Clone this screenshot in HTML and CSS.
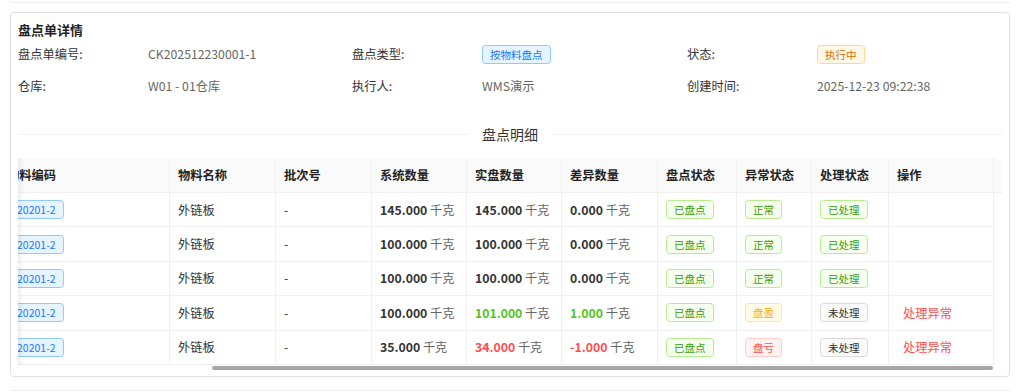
FILE: index.html
```html
<!DOCTYPE html>
<html lang="zh-CN">
<head>
    <meta charset="UTF-8">
    <meta name="viewport" content="width=device-width, initial-scale=1.0">
    <title>盘点单详情</title>
    <link rel="stylesheet" href="styles.css">
</head>
<body>

<div class="page">
    <div class="prev"></div>

    <div class="card">
        <div class="card-title">盘点单详情</div>

        <div class="desc">
            <div class="desc-item"><span class="desc-label">盘点单编号:</span><span class="desc-value">CK202512230001-1</span></div>
            <div class="desc-item"><span class="desc-label">盘点类型:</span><span class="tag tag-blue">按物料盘点</span></div>
            <div class="desc-item"><span class="desc-label">状态:</span><span class="tag tag-orange">执行中</span></div>
            <div class="desc-item"><span class="desc-label">仓库:</span><span class="desc-value">W01 - 01仓库</span></div>
            <div class="desc-item"><span class="desc-label">执行人:</span><span class="desc-value">WMS演示</span></div>
            <div class="desc-item"><span class="desc-label">创建时间:</span><span class="desc-value">2025-12-23 09:22:38</span></div>
        </div>

        <div class="divider"><span>盘点明细</span></div>

        <div class="table-wrap">
            <table class="table">
                <colgroup>
                    <col style="width:171px">
                    <col style="width:106px">
                    <col style="width:96px">
                    <col style="width:95px">
                    <col style="width:95px">
                    <col style="width:96px">
                    <col style="width:79px">
                    <col style="width:75px">
                    <col style="width:77px">
                    <col style="width:105px">
                    <col style="width:8px">
                </colgroup>
                <thead>
                    <tr>
                        <th>物料编码</th>
                        <th>物料名称</th>
                        <th>批次号</th>
                        <th>系统数量</th>
                        <th>实盘数量</th>
                        <th>差异数量</th>
                        <th>盘点状态</th>
                        <th>异常状态</th>
                        <th>处理状态</th>
                        <th>操作</th>
                        <th class="gutter"></th>
                    </tr>
                </thead>
                <tbody>
                    <tr>
                        <td class="code"><span class="tag tag-blue">20201-2</span></td>
                        <td>外链板</td>
                        <td>-</td>
                        <td><b class="num">145.000</b> <span class="unit">千克</span></td>
                        <td><b class="num">145.000</b> <span class="unit">千克</span></td>
                        <td><b class="num">0.000</b> <span class="unit">千克</span></td>
                        <td><span class="tag tag-green">已盘点</span></td>
                        <td><span class="tag tag-green">正常</span></td>
                        <td><span class="tag tag-green">已处理</span></td>
                        <td></td>
                        <td class="gutter"></td>
                    </tr>
                    <tr>
                        <td class="code"><span class="tag tag-blue">20201-2</span></td>
                        <td>外链板</td>
                        <td>-</td>
                        <td><b class="num">100.000</b> <span class="unit">千克</span></td>
                        <td><b class="num">100.000</b> <span class="unit">千克</span></td>
                        <td><b class="num">0.000</b> <span class="unit">千克</span></td>
                        <td><span class="tag tag-green">已盘点</span></td>
                        <td><span class="tag tag-green">正常</span></td>
                        <td><span class="tag tag-green">已处理</span></td>
                        <td></td>
                        <td class="gutter"></td>
                    </tr>
                    <tr>
                        <td class="code"><span class="tag tag-blue">20201-2</span></td>
                        <td>外链板</td>
                        <td>-</td>
                        <td><b class="num">100.000</b> <span class="unit">千克</span></td>
                        <td><b class="num">100.000</b> <span class="unit">千克</span></td>
                        <td><b class="num">0.000</b> <span class="unit">千克</span></td>
                        <td><span class="tag tag-green">已盘点</span></td>
                        <td><span class="tag tag-green">正常</span></td>
                        <td><span class="tag tag-green">已处理</span></td>
                        <td></td>
                        <td class="gutter"></td>
                    </tr>
                    <tr>
                        <td class="code"><span class="tag tag-blue">20201-2</span></td>
                        <td>外链板</td>
                        <td>-</td>
                        <td><b class="num">100.000</b> <span class="unit">千克</span></td>
                        <td><b class="num up">101.000</b> <span class="unit">千克</span></td>
                        <td><b class="num up">1.000</b> <span class="unit">千克</span></td>
                        <td><span class="tag tag-green">已盘点</span></td>
                        <td><span class="tag tag-gold">盘盈</span></td>
                        <td><span class="tag tag-default">未处理</span></td>
                        <td><a class="link">处理异常</a></td>
                        <td class="gutter"></td>
                    </tr>
                    <tr>
                        <td class="code"><span class="tag tag-blue">20201-2</span></td>
                        <td>外链板</td>
                        <td>-</td>
                        <td><b class="num">35.000</b> <span class="unit">千克</span></td>
                        <td><b class="num down">34.000</b> <span class="unit">千克</span></td>
                        <td><b class="num down">-1.000</b> <span class="unit">千克</span></td>
                        <td><span class="tag tag-green">已盘点</span></td>
                        <td><span class="tag tag-red">盘亏</span></td>
                        <td><span class="tag tag-default">未处理</span></td>
                        <td><a class="link">处理异常</a></td>
                        <td class="gutter"></td>
                    </tr>
                </tbody>
            </table>
            <div class="hscroll"><div class="thumb"></div></div>
        </div>
    </div>

    <div class="next"></div>
</div>

</body>
</html>
```

FILE: styles.css
```css
body {
    margin: 0;
    font-family: "Noto Sans CJK SC", "Noto Sans", sans-serif;
    font-size: 12.25px;
    color: #333;
    background-color: #fff;
}

.page {
    padding: 0 14px 0 10px;
}

.prev {
    height: 2px;
    border-bottom: 1px solid #eee;
    margin-bottom: 9px;
}

.next {
    height: 10px;
    border-top: 1px solid #eee;
    margin-top: 13px;
}

.card {
    border: 1px solid #e2e2e2;
    border-radius: 4px;
    padding: 8px 7px 4px;
    box-shadow: 0 1px 3px rgba(0, 0, 0, 0.05);
}

.card-title {
    font-size: 13px;
    font-weight: bold;
    line-height: 17px;
    color: #1f1f1f;
}

.desc {
    display: grid;
    grid-template-columns: 334px 335px 1fr;
    grid-auto-rows: 32px;
}

.desc-item {
    display: flex;
    align-items: center;
}

.desc-label {
    width: 130px;
    flex-shrink: 0;
    color: #333;
}

.desc-value {
    color: #666;
}

.tag {
    display: inline-block;
    font-size: 10.5px;
    line-height: 17px;
    padding: 0 7px;
    border: 1px solid;
    border-radius: 3.5px;
    white-space: nowrap;
}

.tag-blue {
    color: #1677ff;
    background-color: #e6f4ff;
    border-color: #91caff;
}

.tag-orange {
    color: #d46b08;
    background-color: #fff7e6;
    border-color: #ffd591;
}

.tag-green {
    color: #389e0d;
    background-color: #f6ffed;
    border-color: #b7eb8f;
}

.tag-gold {
    color: #faad14;
    background-color: #fffbe6;
    border-color: #ffe58f;
}

.tag-red {
    color: #ff4d4f;
    background-color: #fff2f0;
    border-color: #ffccc7;
}

.tag-default {
    color: #333;
    background-color: #fafafa;
    border-color: #d9d9d9;
}

.divider {
    display: flex;
    align-items: center;
    gap: 14px;
    margin: 22px 0 14px;
    font-size: 14px;
    line-height: 20px;
    color: #333;
}

.divider::before,
.divider::after {
    content: "";
    flex: 1;
    border-top: 1px solid #f0f0f0;
}

.table-wrap {
    position: relative;
    overflow: hidden;
}

.table-wrap::before {
    content: "";
    position: absolute;
    left: 0;
    top: 0;
    bottom: 7px;
    width: 6px;
    background: linear-gradient(to right, rgba(0, 0, 0, 0.06), rgba(0, 0, 0, 0));
    z-index: 1;
}

.table {
    table-layout: fixed;
    border-collapse: separate;
    border-spacing: 0;
    width: 1003px;
    margin-left: -19px;
}

.table th,
.table td {
    padding: 0 8px;
    text-align: left;
    border-right: 1px solid #f0f0f0;
    border-bottom: 1px solid #f0f0f0;
    white-space: nowrap;
    overflow: hidden;
}

.table thead tr {
    height: 35px;
}

.table tbody tr {
    height: 34.4px;
}

.table th {
    background-color: #fafafa;
    font-weight: bold;
    color: #1f1f1f;
}

.table th.gutter {
    padding: 0;
    border-right: none;
    border-top-right-radius: 7px;
}

.table td.gutter {
    padding: 0;
    border: none;
}

.table td.code {
    padding-left: 10px;
}

.num {
    color: #333;
}

.num.up {
    color: #52c41a;
}

.num.down {
    color: #ff4d4f;
}

.unit {
    color: #666;
}

.link {
    color: #ff4d4f;
    padding-left: 6px;
    cursor: pointer;
}

.hscroll {
    height: 7px;
    padding-top: 1px;
    box-sizing: border-box;
}

.thumb {
    margin-left: 194px;
    width: 781px;
    height: 4px;
    background-color: #a6a6a6;
    border-radius: 2px;
}
```
